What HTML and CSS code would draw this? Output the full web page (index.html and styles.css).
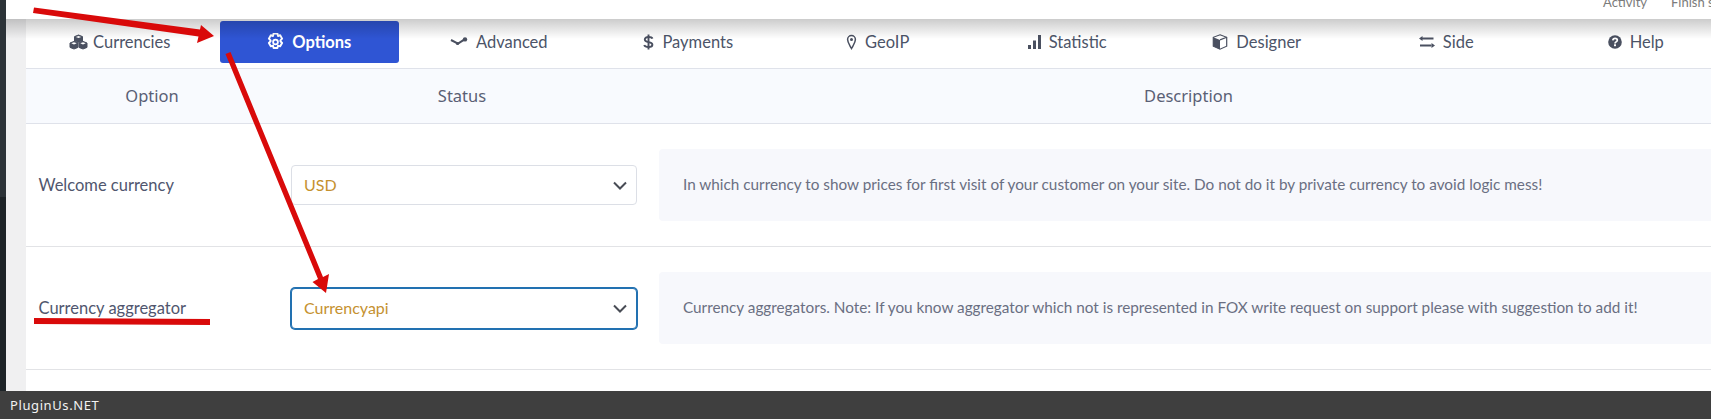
FILE: index.html
```html
<!DOCTYPE html>
<html lang="en">
<head>
    <meta charset="UTF-8">
    <meta name="viewport" content="width=device-width, initial-scale=1.0">
    <title>Currency options</title>
    <link rel="stylesheet" href="styles.css">
</head>
<body>
    <div class="shell">
        <div class="sidebar">
            <div class="sidebar-top"></div>
            <div class="sidebar-bottom"></div>
        </div>
        <div class="main">
            <div class="adminbar">
                <span>Activity</span>
                <span>Finish setup</span>
            </div>
            <div class="panel">
                <div class="tabs">
                    <a class="tab">
                        <svg class="icon icon-tight" width="19" height="16" viewBox="0 0 19 16"><g fill="#4a5060" stroke="#4a5060" stroke-width="1" stroke-linejoin="round"><path d="M9.5 1L13.500 2.600V7L9.500 8.600 5.500 7V2.600z"/><path d="M5 7.400L9 9v4.400L5 15 1 13.400V9z"/><path d="M14 7.400L18 9v4.400L14 15l-4-1.600V9z"/></g><path d="M6.800 2.900l2.700-1 2.700 1-2.700 1.100zM2.300 9.300l2.700-1 2.700 1L5 10.400zM11.300 9.300l2.700-1 2.700 1-2.700 1.100z" fill="#fff"/></svg>
                        Currencies
                    </a>
                    <a class="tab active">
                        <svg class="icon" width="17" height="18" viewBox="1 .5 14 15"><path d="M6.400 1h3.200l.5 2 1.800-.6 1.600 2.800-1.400 1.400v.8l1.400 1.400-1.600 2.800-1.800-.6-.5 2H6.400l-.5-2-1.800.6-1.600-2.800 1.400-1.400v-.8L2.500 5.200l1.600-2.800 1.800.6z" fill="none" stroke="#fff" stroke-width="1.600" stroke-linejoin="round"/><circle cx="8" cy="8" r="2" fill="none" stroke="#fff" stroke-width="1.500"/></svg>
                        Options
                    </a>
                    <a class="tab">
                        <svg class="icon" width="18" height="16" viewBox="0 0 18 16"><path d="M1 6l7 3.600 7-4.400" fill="none" stroke="#4a5060" stroke-width="2"/><circle cx="15" cy="5.400" r="2.200" fill="#4a5060"/><circle cx="7.500" cy="9.500" r="1.600" fill="#4a5060"/></svg>
                        Advanced
                    </a>
                    <a class="tab">
                        <svg class="icon" width="11" height="16" viewBox="0 0 11 16"><path d="M9.500 4.600C9 3.400 7.400 3 5.500 3 3.500 3 1.800 3.800 1.800 5.500c0 3.600 7.600 1.600 7.600 5.200 0 1.600-1.800 2.300-3.900 2.300-2 0-3.800-.6-4.300-2" fill="none" stroke="#4a5060" stroke-width="1.900"/><path d="M5.500.5v15" stroke="#4a5060" stroke-width="1.900"/></svg>
                        Payments
                    </a>
                    <a class="tab">
                        <svg class="icon" width="11" height="16" viewBox="0 0 11 16"><path d="M5.500 14.500C3.500 10.800 1.600 8.600 1.600 5.500a3.900 3.900 0 0 1 7.800 0c0 3.100-1.900 5.300-3.900 9z" fill="none" stroke="#4a5060" stroke-width="1.500"/><circle cx="5.500" cy="5.500" r="1.500" fill="#4a5060"/></svg>
                        GeoIP
                    </a>
                    <a class="tab">
                        <svg class="icon" width="13" height="16" viewBox="0 0 13 16"><path d="M0 11h3v4H0zM5 6.500h3V15H5zM10 1h3v14h-3z" fill="#4a5060"/></svg>
                        Statistic
                    </a>
                    <a class="tab">
                        <svg class="icon" width="16" height="16" viewBox="0 0 16 16"><path d="M8 .8l6.700 2.500v8.900L8 15.200 1.300 12.200V3.300z" fill="#fff" stroke="#4a5060" stroke-width="1.200"/><path d="M1.300 3.300L8 5.900v9.300l-6.700-3z" fill="#4a5060"/><path d="M14.700 3.300L8 5.900" stroke="#4a5060" stroke-width="1.200"/></svg>
                        Designer
                    </a>
                    <a class="tab">
                        <svg class="icon" width="16" height="16" viewBox="0 0 16 16"><path d="M3 4.500h11.500M1 11.500h11.500" stroke="#4a5060" stroke-width="2"/><path d="M0 4.500l3.500-2.500v5zM16 11.500l-3.500-2.500v5z" fill="#4a5060"/></svg>
                        Side
                    </a>
                    <a class="tab">
                        <svg class="icon" width="14" height="16" viewBox="0 0 14 16"><circle cx="7" cy="8" r="6.800" fill="#4a5060"/><path d="M4.800 6.300C5 4.900 6 4.300 7.100 4.300c1.300 0 2.200.8 2.200 1.900 0 1.700-2.300 1.600-2.300 3.200" fill="none" stroke="#fff" stroke-width="1.700"/><rect x="6" y="10.300" width="2" height="1.900" fill="#fff"/></svg>
                        Help
                    </a>
                </div>

                <div class="row head">
                    <div>Option</div>
                    <div>Status</div>
                    <div>Description</div>
                </div>

                <div class="row">
                    <div class="label">Welcome currency</div>
                    <div class="cell">
                        <div class="select">
                            USD
                            <svg width="14" height="9" viewBox="0 0 14 9"><path d="M1 1.500l6 6 6-6" fill="none" stroke="#484c55" stroke-width="2"/></svg>
                        </div>
                    </div>
                    <div class="cell">
                        <div class="desc">In which currency to show prices for first visit of your customer on your site. Do not do it by private currency to avoid logic mess!</div>
                    </div>
                </div>

                <div class="row">
                    <div class="label">Currency aggregator</div>
                    <div class="cell">
                        <div class="select focus">
                            Currencyapi
                            <svg width="14" height="9" viewBox="0 0 14 9"><path d="M1 1.500l6 6 6-6" fill="none" stroke="#484c55" stroke-width="2"/></svg>
                        </div>
                    </div>
                    <div class="cell">
                        <div class="desc">Currency aggregators. Note: If you know aggregator which not is represented in FOX write request on support please with suggestion to add it!</div>
                    </div>
                </div>
            </div>
        </div>
    </div>
    <div class="footer">PluginUs.NET</div>

    <!-- red marks drawn over the screenshot -->
    <svg class="marks" width="1711" height="419" viewBox="0 0 1711 419">
        <path d="M34 7.500L200 29.500 201 25 214 36 197 43 198.500 36.500 33 13z" fill="#d90a0a"/>
        <path d="M225.500 54L230.500 52 323 277 329 274 326 293 312.500 282 318 279z" fill="#d90a0a"/>
        <path d="M34 318l176 1v6l-176-1z" fill="#d90a0a"/>
    </svg>
</body>
</html>
```

FILE: styles.css
```css
* {
    box-sizing: border-box;
}

html, body {
    margin: 0;
    height: 100%;
    overflow: hidden;
}

body {
    font-family: Lato, Arial, sans-serif;
    display: flex;
    flex-direction: column;
    background-color: #fff;
}

.shell {
    flex: 1;
    display: flex;
    min-height: 0;
    overflow: hidden;
}

.sidebar {
    width: 6px;
    flex: none;
    display: flex;
    flex-direction: column;
}

.sidebar-top {
    height: 197px;
    background-color: #2c3338;
}

.sidebar-bottom {
    flex: 1;
    background-color: #1d2327;
}

.main {
    flex: 1;
    min-width: 0;
    display: flex;
    flex-direction: column;
    background-color: #f0f0f1;
}

.adminbar {
    position: relative;
    z-index: 2;
    flex: none;
    height: 19px;
    padding: 0 0 9px 1597px;
    display: flex;
    align-items: flex-end;
    gap: 24px;
    overflow: hidden;
    white-space: nowrap;
    font-size: 13px;
    color: #7b7b7b;
    background-color: #fff;
}

.panel {
    position: relative;
    flex: 1;
    margin-left: 20px;
    width: 1705px;
    background-color: #fff;
}

/* shadow of the top bar, falls over the tabs */
.panel::before {
    content: "";
    position: absolute;
    left: -20px;
    right: 0;
    top: 0;
    height: 20px;
    z-index: 1;
    background: linear-gradient(rgba(0, 0, 0, 0.2), rgba(0, 0, 0, 0));
}

.tabs {
    display: flex;
    height: 49px;
    padding-top: 2px;
    padding-bottom: 5px;
    margin-left: -1px;
}

.tab {
    flex: 0 0 179.5px;
    margin: 0 5px;
    display: flex;
    justify-content: center;
    align-items: center;
    gap: 8px;
    font-size: 16.5px;
    color: #4c5468;
    border-radius: 3px;
}

.tab.active {
    background-color: #2f55d4;
    color: #fff;
    font-weight: 700;
}

.icon {
    flex: none;
}

.icon-tight {
    margin-right: -3px;
}

.row {
    display: grid;
    grid-template-columns: 252px 368px 1fr;
    align-items: center;
    height: 123px;
    border-bottom: 1px solid #e2e3e6;
}

.row.head {
    height: 56px;
    padding-bottom: 2px;
    text-align: center;
    font-family: "Noto Sans", Arial, sans-serif;
    font-size: 16.5px;
    color: #5a6075;
    background-color: #f8fafe;
    border-top: 1px solid #dfe2ea;
    border-bottom: 1px solid #dfe2ea;
}

.label {
    padding-left: 12.5px;
    font-size: 16.5px;
    color: #50566e;
}

.cell {
    padding-left: 13px;
}

.select {
    width: 346px;
    height: 40px;
    padding: 0 9px 2px 12px;
    display: flex;
    justify-content: space-between;
    align-items: center;
    font-size: 16px;
    color: #c5912f;
    background-color: #fff;
    border: 1px solid #dcdfe6;
    border-radius: 4px;
}

.select svg {
    margin-top: 2px;
}

.select.focus {
    height: 41px;
    border-color: #2271b1;
    box-shadow: 0 0 0 1px #2271b1;
}

.desc {
    height: 72px;
    padding-left: 24px;
    padding-bottom: 2px;
    display: flex;
    align-items: center;
    font-size: 15.3px;
    color: #6a6f82;
    background-color: #f7f8fc;
    border-radius: 4px;
}

.footer {
    flex: none;
    height: 28px;
    padding-left: 10px;
    display: flex;
    align-items: center;
    font-family: "Noto Sans", Arial, sans-serif;
    font-size: 13px;
    letter-spacing: 0.6px;
    color: #f2f2f2;
    background-color: #3f3f3f;
}

.marks {
    position: absolute;
    left: 0;
    top: 0;
    z-index: 5;
    pointer-events: none;
}
```
